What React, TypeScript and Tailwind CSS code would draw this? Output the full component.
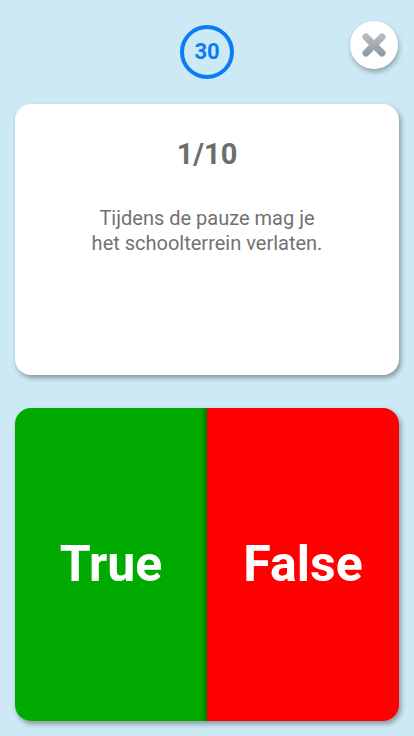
import React from 'react'

const App = () => {
    return (
        <div className="w-[414px] h-[736px] bg-[#cce9f5] flex flex-col px-[15px] font-['Roboto',sans-serif] overflow-hidden">
            <div className="relative h-[104px] flex justify-center">
                <div className="mt-[25px] w-[54px] h-[54px] rounded-full border-[4px] border-[#0a7cf5] flex items-center justify-center">
                    <span className="text-[#0a7cf5] text-[22px] font-bold leading-none">30</span>
                </div>
                <button className="absolute right-[1px] top-[21px] w-[48px] h-[48px] rounded-full bg-white shadow-[1px_3px_5px_rgba(0,0,0,0.3)] flex items-center justify-center">
                    <svg width="26" height="26" viewBox="0 0 26 26">
                        <defs>
                            <linearGradient id="xg" x1="0" y1="0" x2="0" y2="1">
                                <stop offset="0" stopColor="#b4bbbf" />
                                <stop offset="1" stopColor="#939ba0" />
                            </linearGradient>
                        </defs>
                        <path d="M5 5L21 21M21 5L5 21" stroke="url(#xg)" strokeWidth="7" strokeLinecap="round" fill="none" />
                    </svg>
                </button>
            </div>
            <div className="h-[271px] bg-white rounded-[16px] shadow-[2px_3px_5px_rgba(0,0,0,0.35)] flex flex-col items-center">
                <div className="mt-[36px] text-[29px] font-bold text-[#6d6d6d] leading-none">1/10</div>
                <p className="mt-[37px] text-[20px] text-[#727272] text-center leading-[25px]">
                    Tijdens de pauze mag je<br />het schoolterrein verlaten.
                </p>
            </div>
            <div className="mt-[33px] h-[313px] rounded-[16px] overflow-hidden flex shadow-[2px_3px_5px_rgba(0,0,0,0.35)]">
                <button className="flex-1 bg-[#00aa00] flex items-center justify-center">
                    <span className="text-white text-[50px] font-bold">True</span>
                </button>
                <button className="flex-1 bg-[#ff0000] flex items-center justify-center shadow-[-3px_0_4px_rgba(0,0,0,0.3)] relative">
                    <span className="text-white text-[50px] font-bold">False</span>
                </button>
            </div>
        </div>
    )
}

export default App
